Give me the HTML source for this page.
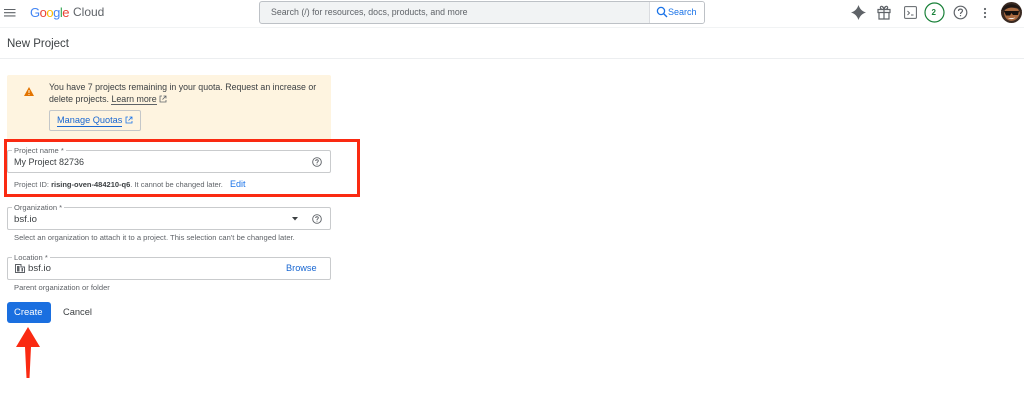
<!DOCTYPE html>
<html><head><meta charset="utf-8"><style>
html,body{margin:0;padding:0;background:#fff}
#p{position:relative;width:1024px;height:416px;overflow:hidden;background:#fff;font-family:"Liberation Sans",sans-serif;color:#3c4043;filter:blur(.3px)}
.t{position:absolute;white-space:nowrap;line-height:1}
.b{position:absolute;box-sizing:border-box}
.f{border:1px solid #c9cbcd;border-radius:2px;left:7px;width:324px;height:23px}
.l{background:#fff;padding:0 2px;font-size:7.600px;color:#5f6368}
.h{font-size:7.600px;color:#5f6368}
svg{position:absolute}
</style></head><body><div id="p">
<div class="b" style="left:0;top:27px;width:1024px;height:1px;background:#f1f3f4"></div>
<div class="b" style="left:0;top:58px;width:1024px;height:1px;background:#eceef0"></div>
<svg style="left:4px;top:8px" width="12" height="9"><path d="M0 1.500H11.500M0 4.700H11.500M0 7.900H11.500" stroke="#5f6368" stroke-width="1.100"/></svg>
<div class="t" style="left:30px;top:6px;font-size:13px;letter-spacing:-.5px"><span style="color:#4285f4">G</span><span style="color:#ea4335">o</span><span style="color:#fbbc05">o</span><span style="color:#4285f4">g</span><span style="color:#34a853">l</span><span style="color:#ea4335">e</span></div>
<div class="t" style="left:73px;top:6px;font-size:12px;color:#5f6368">Cloud</div>
<div class="b" style="left:259px;top:1px;width:446px;height:23px;background:#f1f3f4;border:1px solid #bdc1c6;border-radius:3px"></div>
<div class="b" style="left:649px;top:2px;width:55px;height:21px;background:#fff;border-left:1px solid #dadce0;border-radius:0 2px 2px 0"></div>
<div class="t" style="left:271px;top:8px;font-size:8.800px;color:#5f6368">Search (/) for resources, docs, products, and more</div>
<svg style="left:656px;top:6px" width="12" height="12" viewBox="0 0 12 12"><circle cx="5" cy="5" r="3.600" fill="none" stroke="#1a73e8" stroke-width="1.300"/><path d="M7.600 7.600L11 11" stroke="#1a73e8" stroke-width="1.400"/></svg>
<div class="t" style="left:668px;top:8px;font-size:9px;color:#1a73e8">Search</div>
<svg style="left:851px;top:5px" width="15" height="15" viewBox="0 0 15 15"><path d="M7.500 0C8.800 4 11 6.200 15 7.500C11 8.800 8.800 11 7.500 15C6.200 11 4 8.800 0 7.500C4 6.200 6.200 4 7.500 0Z" fill="#5f6368"/></svg>
<svg style="left:877px;top:5px" width="14" height="15" viewBox="0 0 14 15" fill="none" stroke="#5f6368" stroke-width="1.200"><path d="M1 4.500H13V7.500H1ZM2 7.500V14H12V7.500M7 4.500V14M7 4.500C4 4.500 3 3.500 3.500 2C4.200 .5 6.500 1.500 7 4.500C7.500 1.500 9.800 .5 10.500 2C11 3.500 10 4.500 7 4.500Z"/></svg>
<svg style="left:904px;top:6px" width="13" height="13" viewBox="0 0 13 13" fill="none" stroke="#5f6368"><rect x=".6" y=".6" width="11.800" height="11.800" rx="1"/><path d="M3.500 5L5.500 7L3.500 9M7 9H9.500" stroke-width=".9"/></svg>
<svg style="left:924px;top:2px" width="21" height="21"><circle cx="10.500" cy="10.500" r="9.500" fill="#fff" stroke="#188038" stroke-width="1.200"/></svg>
<div class="t" style="left:931.500px;top:8.500px;font-size:8px;font-weight:bold;color:#188038">2</div>
<svg style="left:953px;top:5px" width="15" height="15" viewBox="0 0 15 15" fill="none" stroke="#5f6368" stroke-width="1.200"><circle cx="7.500" cy="7.500" r="6.300"/><path d="M5.500 6C5.500 3.500 9.500 3.500 9.500 5.800C9.500 7.300 7.500 7.200 7.500 9"/><path d="M7.500 10V11.200"/></svg>
<svg style="left:983px;top:7px" width="4" height="12"><circle cx="2" cy="2" r="1.100" fill="#5f6368"/><circle cx="2" cy="6" r="1.100" fill="#5f6368"/><circle cx="2" cy="10" r="1.100" fill="#5f6368"/></svg>
<svg style="left:1001px;top:2px" width="21" height="21" viewBox="0 0 21 21"><circle cx="10.500" cy="10.500" r="10.500" fill="#3a2a22"/><path d="M3 11C4 21 16 22 19 11L17 7C12 5 7 5 4 8Z" fill="#a8693f"/><path d="M0 9C3 1 16 -1 21 9L17 6C12 5 7 5 3 8Z" fill="#1f1714"/><path d="M3 9H18L17 13H12L10.500 11L9 13.500H5Z" fill="#15110f"/><path d="M7 16C9 17.500 12 17.500 14.500 15.500C12.500 16 9 16.300 7 16Z" fill="#fff"/></svg>

<div class="t" style="left:7px;top:39px;font-size:11.500px;color:#3c4043">New Project</div>

<div class="b" style="left:7px;top:75px;width:324px;height:66px;background:#fef4e0;border-radius:2px"></div>
<svg style="left:24px;top:87px" width="10" height="9"><path d="M5 0L10 9H0Z" fill="#e37400"/><path d="M5 3V6M5 7V8" stroke="#fef4e0" stroke-width="1"/></svg>
<div class="t" style="left:49px;top:82.500px;font-size:8.800px;color:#3c4043">You have 7 projects remaining in your quota. Request an increase or</div>
<div class="t" style="left:49px;top:95px;font-size:8.850px;color:#3c4043">delete projects. <span style="border-bottom:1px solid #5f6368">Learn more</span></div>
<svg style="left:159px;top:95px" width="8" height="8" fill="none" stroke="#5f6368" stroke-width=".8"><path d="M3 1H1V7H7V5M4.500 1H7V3.500M7 1L3.500 4.500"/></svg>
<div class="b" style="left:49px;top:110px;width:92px;height:21px;border:1px solid #c4c7c9;border-radius:2px"></div>
<div class="t" style="left:57px;top:115.500px;font-size:9.200px;color:#1967d2;border-bottom:1px solid #1967d2;padding-bottom:1px">Manage Quotas</div>
<svg style="left:125px;top:116px" width="8" height="8" fill="none" stroke="#1a73e8" stroke-width=".8"><path d="M3 1H1V7H7V5M4.500 1H7V3.500M7 1L3.500 4.500"/></svg>

<div class="b f" style="top:150px;height:22.500px"></div>
<div class="t l" style="left:12px;top:146.500px">Project name *</div>
<div class="t" style="left:14px;top:158px;font-size:9px;color:#3c4043">My Project 82736</div>
<svg style="left:312px;top:157px" width="10" height="10" viewBox="0 0 15 15" fill="none" stroke="#5f6368" stroke-width="1.400"><circle cx="7.500" cy="7.500" r="6.500"/><path d="M5.500 6C5.500 3.500 9.500 3.500 9.500 5.800C9.500 7.300 7.500 7.200 7.500 9M7.500 10V11.500"/></svg>
<div class="t h" style="left:14px;top:180.500px;font-size:7.500px">Project ID: <span style="color:#3c4043;font-weight:bold">rising-oven-484210-q6</span>. It cannot be changed later.</div>
<div class="t" style="left:230px;top:180px;font-size:9px;color:#1a73e8">Edit</div>
<div class="b" style="left:4px;top:139px;width:356px;height:58px;border:3px solid #fa2a12"></div>

<div class="b f" style="top:207px"></div>
<div class="t l" style="left:12px;top:203.500px">Organization *</div>
<div class="t" style="left:14px;top:215px;font-size:9.600px;color:#3c4043">bsf.io</div>
<svg style="left:292px;top:216.500px" width="6" height="4"><path d="M0 0H6L3 3.500Z" fill="#3c4043"/></svg>
<svg style="left:312px;top:214px" width="10" height="10" viewBox="0 0 15 15" fill="none" stroke="#5f6368" stroke-width="1.400"><circle cx="7.500" cy="7.500" r="6.500"/><path d="M5.500 6C5.500 3.500 9.500 3.500 9.500 5.800C9.500 7.300 7.500 7.200 7.500 9M7.500 10V11.500"/></svg>
<div class="t h" style="left:14px;top:234px">Select an organization to attach it to a project. This selection can't be changed later.</div>

<div class="b f" style="top:257px;height:22.500px"></div>
<div class="t l" style="left:12px;top:253.500px">Location *</div>
<svg style="left:15px;top:264px" width="10" height="9" viewBox="0 0 10 9"><path d="M.5 .5H6V3H9.500V8.500H.5Z" fill="none" stroke="#5f6368"/><path d="M2 2H4.500V7.500H2ZM6.500 4H8V7.500H6.500Z" fill="#5f6368"/></svg>
<div class="t" style="left:28px;top:264px;font-size:9.600px;color:#3c4043">bsf.io</div>
<div class="t" style="left:286px;top:264px;font-size:9.200px;color:#1967d2">Browse</div>
<div class="t h" style="left:14px;top:284px">Parent organization or folder</div>

<div class="b" style="left:6.500px;top:302px;width:44px;height:20.500px;background:#1a6fe0;border-radius:3px"></div>
<div class="t" style="left:14px;top:307.500px;font-size:9.500px;color:#fff">Create</div>
<div class="t" style="left:63px;top:307.500px;font-size:9.300px;color:#3c4043">Cancel</div>
<svg style="left:16px;top:326px" width="25" height="54"><path d="M12 1L24 21H15L13.500 52H10.500L9 21H0Z" fill="#fa2a12"/></svg>
</div></body></html>
